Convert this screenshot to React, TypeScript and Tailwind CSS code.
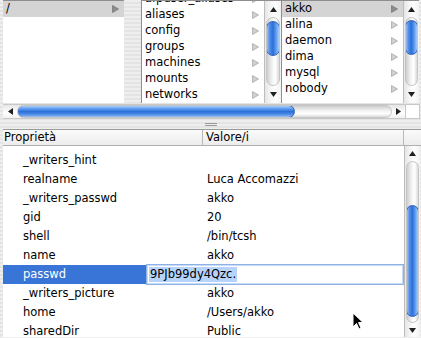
import React from "react";

const Arrow = ({ dark = false }: { dark?: boolean }) => (
  <svg width="7" height="8" viewBox="0 0 7 8" className="shrink-0">
    <polygon points="0.5,0.5 6.5,4 0.5,7.5" fill={dark ? "#8c8c8c" : "#d0d0d0"} stroke={dark ? "#7a7a7a" : "#a8a8a8"} strokeWidth="0.8" />
  </svg>
);

const Tri = ({ dir }: { dir: "up" | "down" | "left" | "right" }) => {
  const pts =
    dir === "up" ? "0,5 3.5,0 7,5" : dir === "down" ? "0,0 7,0 3.5,5" : dir === "left" ? "5,0 5,7 0,3.5" : "0,0 0,7 5,3.5";
  const w = dir === "up" || dir === "down" ? 7 : 5;
  const h = dir === "up" || dir === "down" ? 5 : 7;
  return (
    <svg width={w} height={h} viewBox={`0 0 ${w} ${h}`}>
      <polygon points={pts} fill="#202020" />
    </svg>
  );
};

function VScroll({ upH, downH, thumbTop, thumbH }: { upH: number; downH: number; thumbTop: number; thumbH: number }) {
  return (
    <div className="flex flex-col h-full w-full bg-[linear-gradient(to_right,#e6e6e6,#ffffff_60%,#f2f2f2)] border-l border-[#bdbdbd]">
      <div className="flex items-center justify-center shrink-0" style={{ height: upH }}>
        <Tri dir="up" />
      </div>
      <div className="flex-1 flex flex-col px-[1px] min-h-0">
        <div className="flex-1 rounded-full border border-[#c4c4c4] bg-[linear-gradient(to_right,#cfcfcf,#f4f4f4_45%,#ffffff_70%,#dadada)] flex flex-col overflow-hidden">
          <div
            className="shrink-0 rounded-full border border-[#2f5fb8] bg-[linear-gradient(to_right,#9cc0f2_0%,#4b8ae6_25%,#2e6fd8_50%,#5d9cf0_75%,#a9cdf8_100%)] mx-[-1px]"
            style={{ marginTop: thumbTop, height: thumbH }}
          />
        </div>
      </div>
      <div className="flex items-center justify-center shrink-0" style={{ height: downH }}>
        <Tri dir="down" />
      </div>
    </div>
  );
}

function BRow({ label, selected = false, hasArrow = true }: { label: string; selected?: boolean; hasArrow?: boolean }) {
  return (
    <div className={`h-[16px] flex items-center justify-between pl-[3px] pr-[5px] shrink-0 ${selected ? "bg-[#d4d4d4]" : ""}`}>
      <span className="leading-none">{label}</span>
      {hasArrow && <Arrow dark={selected} />}
    </div>
  );
}

const props: [string, string][] = [
  ["_writers_hint", ""],
  ["realname", "Luca Accomazzi"],
  ["_writers_passwd", "akko"],
  ["gid", "20"],
  ["shell", "/bin/tcsh"],
  ["name", "akko"],
  ["passwd", "__EDIT__"],
  ["_writers_picture", "akko"],
  ["home", "/Users/akko"],
  ["sharedDir", "Public"],
];

export default function App() {
  return (
    <div className="relative w-[421px] h-[338px] overflow-hidden text-[11.5px] text-black font-['DejaVu_Sans',sans-serif] bg-[repeating-linear-gradient(to_bottom,#eeeeee_0px,#eeeeee_2px,#e4e4e4_2px,#e4e4e4_4px)]">
      {/* Browser columns */}
      <div className="flex h-[103px] pl-[3px]">
        <div className="w-[121px] bg-white border-t border-[#8e8e8e] flex flex-col">
          <BRow label="/" selected />
        </div>
        <div className="w-[17px]" />
        <div className="flex border-l border-t border-[#8e8e8e] bg-white">
          <div className="w-[122px] overflow-hidden flex flex-col">
            <div className="h-[6px] overflow-hidden shrink-0 flex flex-col justify-end">
              <BRow label="afpuser_aliases" />
            </div>
            <BRow label="aliases" />
            <BRow label="config" />
            <BRow label="groups" />
            <BRow label="machines" />
            <BRow label="mounts" />
            <BRow label="networks" />
          </div>
          <div className="w-[17px]">
            <VScroll upH={16} downH={17} thumbTop={3} thumbH={35} />
          </div>
        </div>
        <div className="flex border-l border-t border-[#8e8e8e] bg-white">
          <div className="w-[121px] overflow-hidden flex flex-col">
            <BRow label="akko" selected />
            <BRow label="alina" />
            <BRow label="daemon" />
            <BRow label="dima" />
            <BRow label="mysql" />
            <BRow label="nobody" />
          </div>
          <div className="w-[16px]">
            <VScroll upH={16} downH={17} thumbTop={2} thumbH={35} />
          </div>
        </div>
      </div>

      {/* Horizontal scroller */}
      <div className="flex h-[15px] pl-[3px] mt-[1px]">
        <div className="w-[402px] flex items-center border-t border-b border-[#c8c8c8] bg-[linear-gradient(to_bottom,#e6e6e6,#ffffff_60%,#f2f2f2)]">
          <div className="w-[14px] flex items-center justify-center">
            <Tri dir="left" />
          </div>
          <div className="flex-1 h-[13px] rounded-full border border-[#c4c4c4] bg-[linear-gradient(to_bottom,#cfcfcf,#f4f4f4_45%,#ffffff_70%,#dadada)] flex overflow-hidden">
            <div className="w-[276px] h-full rounded-full border border-[#2f5fb8] bg-[linear-gradient(to_bottom,#a9cdf8_0%,#5d9cf0_25%,#2e6fd8_50%,#4b8ae6_75%,#9cc0f2_100%)] my-[-1px] ml-[-1px] box-content" />
          </div>
          <div className="w-[13px] flex items-center justify-center">
            <Tri dir="right" />
          </div>
        </div>
        <div className="w-[15px] bg-white border border-[#c8c8c8]" />
      </div>

      {/* Splitter */}
      <div className="h-[10px] flex items-center justify-center">
        <div className="flex flex-col gap-[1px]">
          <div className="w-[12px] h-[1px] bg-[#9a9a9a]" />
          <div className="w-[12px] h-[1px] bg-[#9a9a9a]" />
        </div>
      </div>

      {/* Table */}
      <div className="ml-[3px] flex flex-col border-t border-[#9a9a9a]">
        <div className="h-[16px] flex border-b border-[#b0b0b0] bg-[linear-gradient(to_bottom,#fafafa,#ececec)]">
          <div className="w-[200px] pl-[1px] flex items-center border-r border-[#b8b8b8]">Proprietà</div>
          <div className="w-[201px] pl-[3px] flex items-center border-r border-[#b8b8b8]">Valore/i</div>
          <div className="flex-1" />
        </div>
        <div className="h-[191px] flex">
          <div className="w-[401px] bg-white flex flex-col pt-[5px] overflow-hidden">
            {props.map(([k, v]) =>
              v === "__EDIT__" ? (
                <div key={k} className="h-[19px] flex shrink-0">
                  <div className="w-[143px] bg-[#3875d7] text-white pl-[20px] flex items-center">{k}</div>
                  <div className="flex-1 h-[21px] mt-[-1px] border border-[#8eb1e6] shadow-[inset_0_0_0_1px_#c6dbf7] bg-white flex items-center pl-[2px]">
                    <span className="bg-[#b5d3fb] px-[1px] leading-[15px]">9PJb99dy4Qzc.</span>
                  </div>
                </div>
              ) : (
                <div key={k} className="h-[19px] flex items-center shrink-0">
                  <div className="w-[200px] pl-[20px]">{k}</div>
                  <div className="pl-[4px]">{v}</div>
                </div>
              )
            )}
          </div>
          <div className="w-[16px]">
            <VScroll upH={15} downH={14} thumbTop={43} thumbH={112} />
          </div>
        </div>
      </div>

      {/* Mouse cursor */}
      <svg className="absolute left-[352px] top-[312px]" width="12" height="19" viewBox="0 0 12 19">
        <polygon points="1,1 1,15 4.5,11.5 7,17 9,16 6.5,10.5 11,10.5" fill="#000" stroke="#fff" strokeWidth="1" />
      </svg>
    </div>
  );
}
